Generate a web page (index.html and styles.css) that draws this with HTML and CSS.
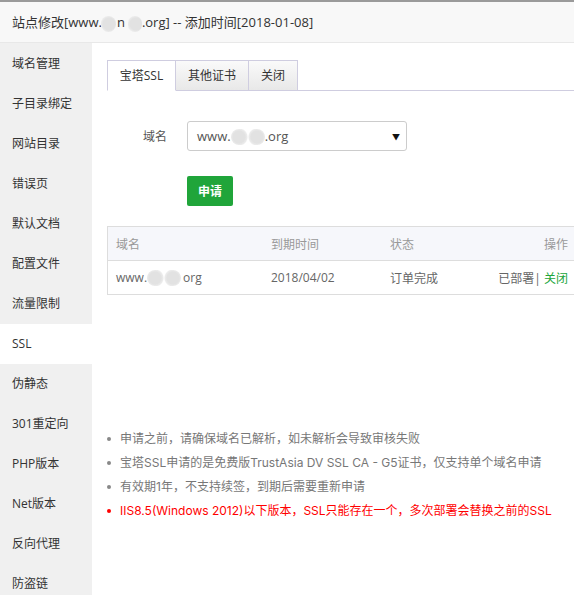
FILE: index.html
```html
<!DOCTYPE html>
<html lang="zh-CN">
<head>
<meta charset="utf-8">
<title>站点修改</title>
<link rel="stylesheet" href="styles.css">
</head>
<body>
<div class="topbar"></div>
<header class="header">站点修改[www.<span class="blob b-title1"></span>n<span class="blob b-title2"></span>.org] -- 添加时间[2018-01-08]</header>
<div class="body">
  <nav class="sidebar">
    <div class="nav-item">域名管理</div>
    <div class="nav-item">子目录绑定</div>
    <div class="nav-item">网站目录</div>
    <div class="nav-item">错误页</div>
    <div class="nav-item">默认文档</div>
    <div class="nav-item">配置文件</div>
    <div class="nav-item">流量限制</div>
    <div class="nav-item active">SSL</div>
    <div class="nav-item">伪静态</div>
    <div class="nav-item">301重定向</div>
    <div class="nav-item">PHP版本</div>
    <div class="nav-item">Net版本</div>
    <div class="nav-item">反向代理</div>
    <div class="nav-item">防盗链</div>
  </nav>
  <main class="main">
    <div class="tabs">
      <div class="tab active">宝塔SSL</div>
      <div class="tab">其他证书</div>
      <div class="tab">关闭</div>
    </div>
    <div class="form-row">
      <label class="form-label">域名</label>
      <div class="select"><span class="select-text">www.<span class="blob b-sel"></span>.org</span><span class="arrow">▼</span></div>
    </div>
    <div class="btn-row"><button class="btn">申请</button></div>
    <div class="table">
      <div class="tr th">
        <div class="c1">域名</div>
        <div class="c2">到期时间</div>
        <div class="c3">状态</div>
        <div class="c4">操作</div>
      </div>
      <div class="tr td">
        <div class="c1">www.<span class="blob b-tab"></span>org</div>
        <div class="c2">2018/04/02</div>
        <div class="c3">订单完成</div>
        <div class="c4">已部署| <span class="green">关闭</span></div>
      </div>
    </div>
    <ul class="notes">
      <li>申请之前，请确保域名已解析，如未解析会导致审核失败</li>
      <li>宝塔SSL申请的是免费版TrustAsia DV SSL CA - G5证书，仅支持单个域名申请</li>
      <li>有效期1年，不支持续签，到期后需要重新申请</li>
      <li class="red">IIS8.5(Windows 2012)以下版本，SSL只能存在一个，多次部署会替换之前的SSL</li>
    </ul>
  </main>
</div>
</body>
</html>
```
FILE: styles.css
```css
* { box-sizing: border-box; }
html, body { margin: 0; padding: 0; }
body {
  width: 574px;
  height: 595px;
  overflow: hidden;
  background: #fff;
  font-family: "Open Sans", "Noto Sans CJK SC", sans-serif;
  color: #333;
}
.topbar { height: 2px; background: #9a9a9a; }
.header {
  height: 41px;
  background: #f8f8f8;
  border-bottom: 1px solid #e8e8e8;
  padding-left: 12px;
  font-size: 13px;
  line-height: 41px;
  color: #333;
  white-space: nowrap;
}
.blob {
  display: inline-block;
  vertical-align: middle;
  height: 16px;
  border-radius: 8px;
  background: radial-gradient(circle at 8px 8px, #e2e2e2 0 6px, #ececec 8px, transparent 9px),
              radial-gradient(circle at calc(100% - 8px) 8px, #e2e2e2 0 6px, #ececec 8px, transparent 9px);
}
.b-title1 { width: 15px; margin: 0 1px 0 -1px; }
.b-title2 { width: 14px; margin: 0 0 0 3px; }
.b-sel { width: 34px; }
.b-tab { width: 34px; margin-right: 2px; }
.body { display: flex; height: 552px; }
.sidebar {
  width: 92px;
  flex: none;
  background: #f0f0f0;
  padding-top: 1px;
}
.nav-item {
  height: 40px;
  line-height: 40px;
  padding-left: 12px;
  font-size: 12px;
  color: #333;
  white-space: nowrap;
}
.nav-item.active { background: #fff; }
.main {
  flex: 1;
  min-width: 0;
  padding: 17px 0 0 15px;
  display: flex;
  flex-direction: column;
}
.tabs {
  display: flex;
  height: 31px;
  border-bottom: 1px solid #cfcde0;
  margin-right: -20px;
}
.tab {
  height: 31px;
  line-height: 30px;
  font-size: 12px;
  color: #333;
  border: 1px solid #cfcde0;
  border-left: none;
  background: linear-gradient(#fafafa, #e8e8e8);
  padding: 0;
  text-align: center;
}
.tab:first-child { border-left: 1px solid #cfcde0; }
.tab.active { background: #fff; border-bottom-color: #fff; width: 69px; }
.tab:nth-child(2) { width: 73px; }
.tab:nth-child(3) { width: 49px; }
.form-row {
  display: flex;
  align-items: center;
  margin-top: 30px;
}
.form-label {
  width: 60px;
  text-align: right;
  font-size: 12px;
  color: #555;
  margin-right: 20px;
}
.select {
  width: 220px;
  height: 30px;
  border: 1px solid #ccc;
  border-radius: 3px;
  display: flex;
  align-items: center;
  justify-content: space-between;
  padding: 0 6px 0 9px;
  font-size: 13px;
  color: #555;
}
.select-text { white-space: nowrap; }
.arrow { font-size: 8px; color: #111; }
.btn-row { margin-top: 25px; padding-left: 80px; }
.btn {
  width: 46px;
  height: 30px;
  border: none;
  border-radius: 2px;
  background: #20a53a;
  color: #fff;
  font-family: "Open Sans", "Noto Sans CJK SC", sans-serif;
  font-size: 12px;
  font-weight: bold;
  padding: 0;
}
.table {
  margin-top: 20px;
  width: 474px;
  border: 1px solid #ddd;
  font-size: 12px;
}
.tr { display: flex; align-items: center; }
.th { background: #f6f7fb; color: #999; border-bottom: 1px solid #ddd; height: 34px; }
.td { color: #666; height: 33px; }
.c1 { width: 163px; padding-left: 8px; white-space: nowrap; }
.c2 { width: 119px; }
.c3 { width: 100px; }
.c4 { flex: 1; text-align: right; padding-right: 12px; white-space: nowrap; }
.green { color: #20a53a; }
.notes {
  list-style: none;
  margin: 132px 0 0 0;
  padding: 0;
  font-size: 12px;
  color: #777;
  font-family: "Inter", "Noto Sans CJK SC", sans-serif;
}
.notes li {
  position: relative;
  height: 24px;
  line-height: 24px;
  padding-left: 13px;
  white-space: nowrap;
}
.notes li::before {
  content: "";
  position: absolute;
  left: 0;
  top: 10px;
  width: 4px;
  height: 4px;
  border-radius: 50%;
  background: #888;
}
.notes li.red { color: #f00; }
.notes li.red::before { background: #f00; }
```
